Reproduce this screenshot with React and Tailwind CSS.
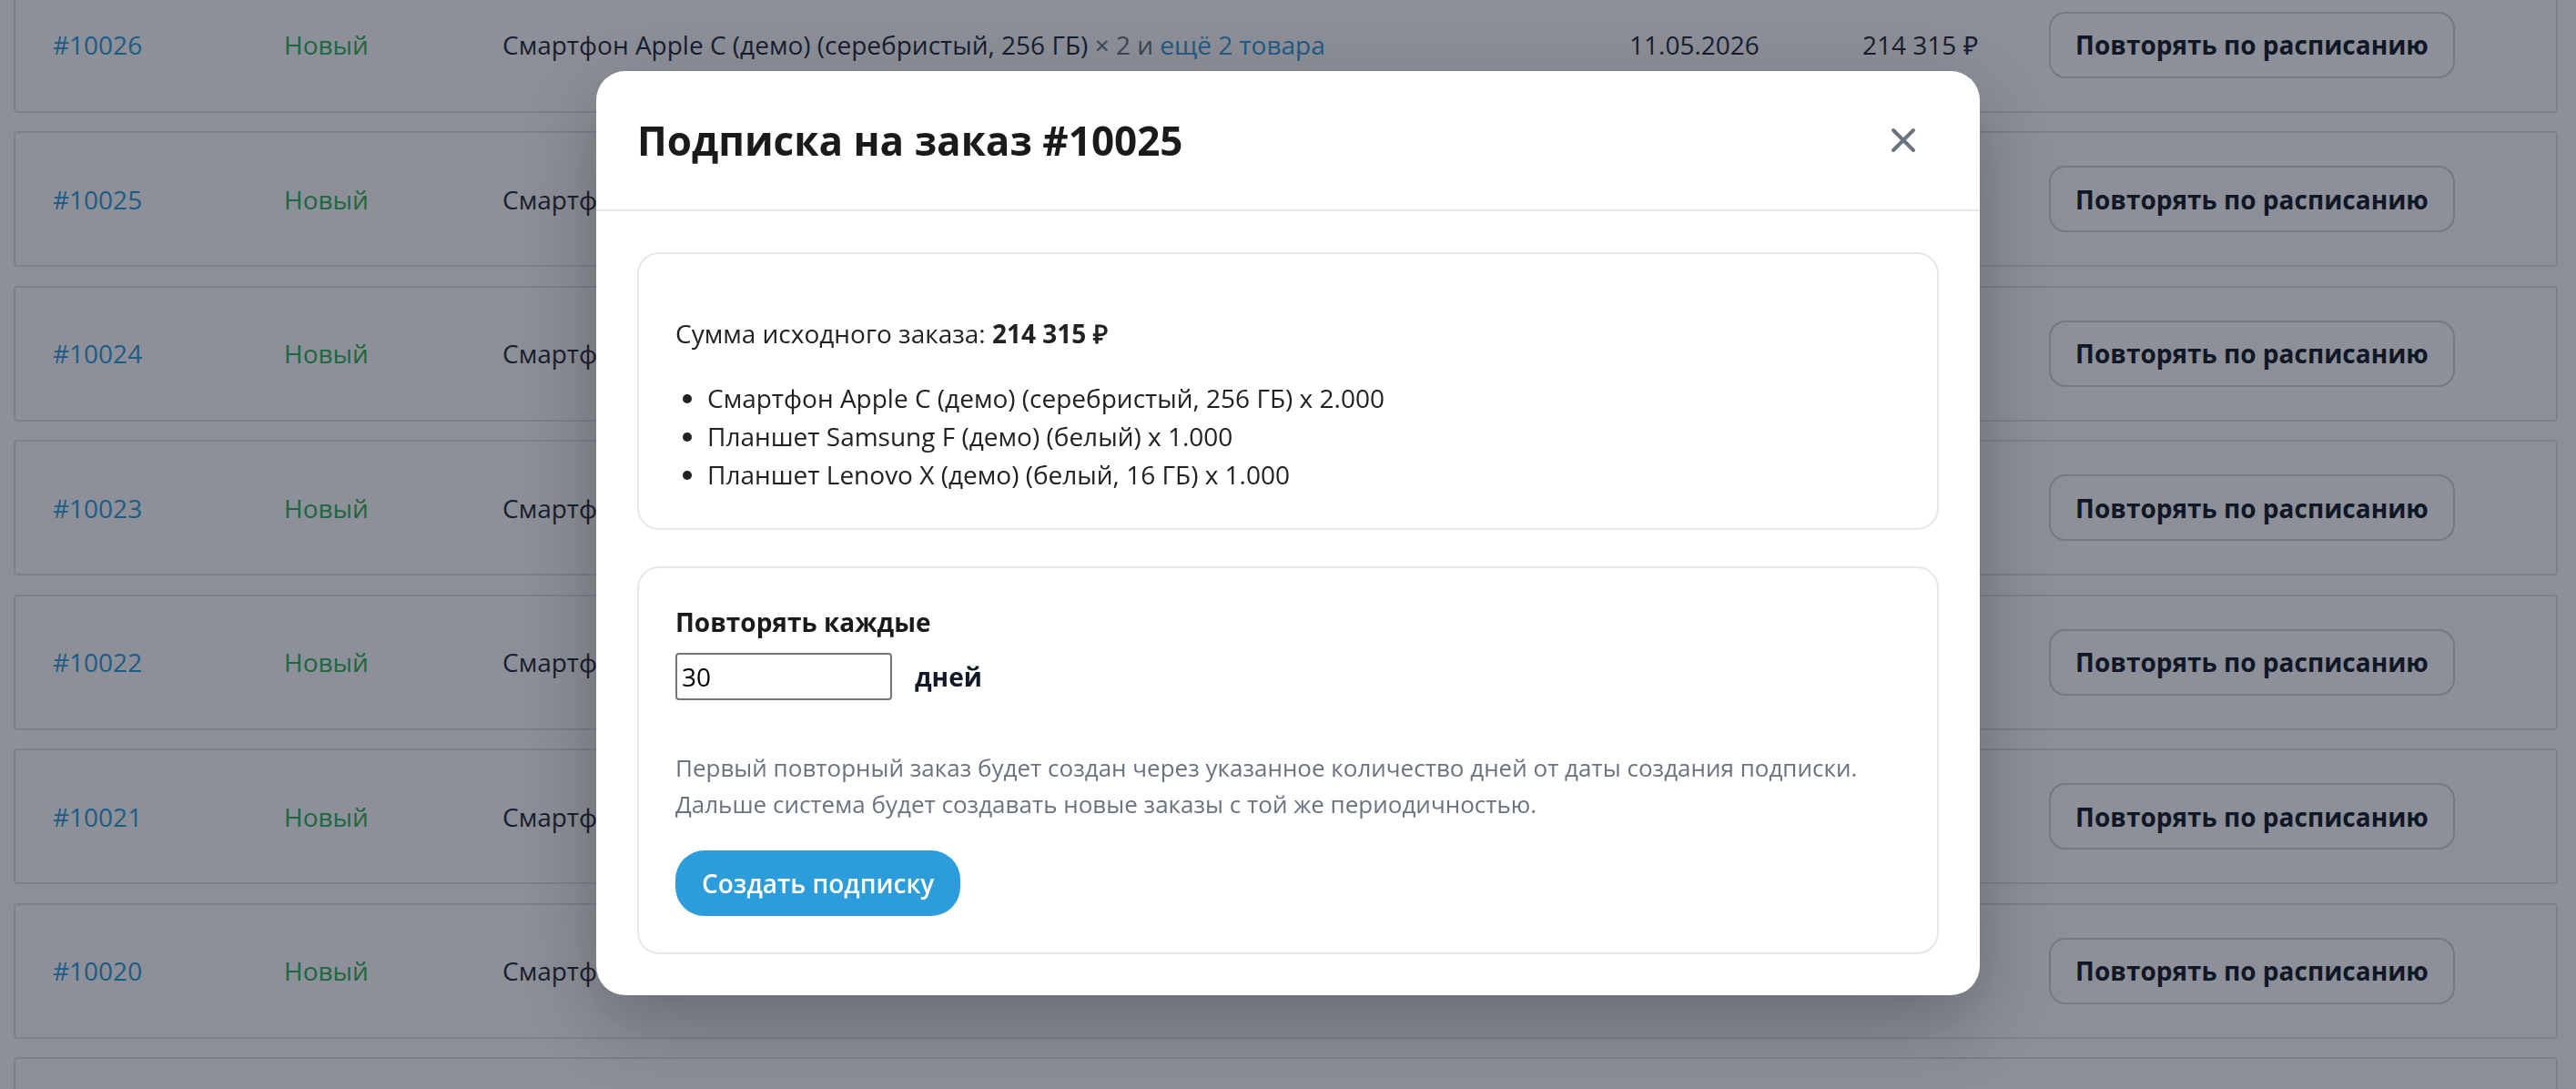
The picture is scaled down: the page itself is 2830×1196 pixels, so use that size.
import { useState } from "react";

const orders = [
  { id: 10026, date: "11.05.2026", total: "214 315 ₽" },
  { id: 10025, date: "11.05.2026", total: "214 315 ₽" },
  { id: 10024, date: "10.05.2026", total: "214 315 ₽" },
  { id: 10023, date: "10.05.2026", total: "214 315 ₽" },
  { id: 10022, date: "09.05.2026", total: "214 315 ₽" },
  { id: 10021, date: "09.05.2026", total: "214 315 ₽" },
  { id: 10020, date: "08.05.2026", total: "214 315 ₽" },
  { id: 10019, date: "08.05.2026", total: "214 315 ₽" },
];

const items = [
  "Смартфон Apple C (демо) (серебристый, 256 ГБ) x 2.000",
  "Планшет Samsung F (демо) (белый) x 1.000",
  "Планшет Lenovo X (демо) (белый, 16 ГБ) x 1.000",
];

function OrderRow({ order }) {
  return (
    <div className="grid h-[149px] grid-cols-[254px_240px_1238px_256px_205px_446px] items-center rounded-[4px] border-2 border-[#dfe2e8] bg-white pl-[41px] text-[28px] leading-[40px]">
      <a className="text-[#2d9cdb]">#{order.id}</a>
      <span className="text-[#2fae55]">Новый</span>
      <span className="whitespace-nowrap text-[#1f2937]">
        Смартфон Apple C (демо) (серебристый, 256 ГБ){" "}
        <span className="text-[#6b7280]">× 2 и</span>{" "}
        <a className="text-[#2d9cdb]">ещё 2 товара</a>
      </span>
      <span className="text-[#1f2937]">{order.date}</span>
      <span className="font-medium text-[#1f2937]">{order.total}</span>
      <button className="h-[73px] w-[446px] rounded-[18px] border-2 border-[#cdd3dd] font-bold text-[#111827]">
        Повторять по расписанию
      </button>
    </div>
  );
}

function CloseIcon() {
  return (
    <svg width="28" height="28" viewBox="0 0 28 28" fill="none">
      <path d="M3 3L25 25M25 3L3 25" stroke="#6b7280" strokeWidth="4" strokeLinecap="round" />
    </svg>
  );
}

function SubscriptionModal({ onClose }) {
  const [days, setDays] = useState("30");

  return (
    <div className="fixed inset-0 flex justify-center bg-[#111827]/[0.48] pt-[78px]">
      <div className="h-fit w-[1520px] rounded-[32px] bg-white shadow-[0_30px_90px_rgba(0,0,0,0.28)]">
        <div className="flex h-[154px] items-center justify-between border-b-2 border-[#e6e7eb] px-[45px]">
          <h2 className="text-[44px] font-bold text-[#1a1a1a]">Подписка на заказ #10025</h2>
          <button onClick={onClose} className="mr-[25px] flex">
            <CloseIcon />
          </button>
        </div>

        <div className="flex flex-col gap-[40px] p-[45px] text-[28px] leading-[42px] text-[#222]">
          <div className="rounded-[24px] border-2 border-[#e6e7eb] px-[40px] pt-[40px] pb-[38px]">
            <p className="mt-[26px]">
              Сумма исходного заказа: <b className="font-bold">214 315 ₽</b>
            </p>
            <ul className="mt-[29px] list-disc pl-[35px]">
              {items.map((item) => (
                <li key={item}>{item}</li>
              ))}
            </ul>
          </div>

          <div className="rounded-[24px] border-2 border-[#e6e7eb] px-[40px] pt-[39px] pb-[40px]">
            <label className="block leading-[40px] font-bold text-[#1a1a1a]">Повторять каждые</label>
            <div className="mt-[14px] flex items-center gap-[25px]">
              <input
                value={days}
                onChange={(e) => setDays(e.target.value)}
                className="h-[52px] w-[238px] rounded-[4px] border-2 border-[#767676] px-[5px] text-[28px] text-black outline-none"
              />
              <span className="font-bold text-[#111827]">дней</span>
            </div>
            <p className="mt-[54px] text-[26px] leading-[40px] text-[#6b7280]">
              Первый повторный заказ будет создан через указанное количество дней от даты создания подписки.
              <br />
              Дальше система будет создавать новые заказы с той же периодичностью.
            </p>
            <button className="mt-[31px] h-[72px] rounded-[32px] bg-[#2d9cdb] px-[29px] font-semibold text-white">
              Создать подписку
            </button>
          </div>
        </div>
      </div>
    </div>
  );
}

export default function App() {
  const [open, setOpen] = useState(true);

  return (
    <div className="min-h-screen overflow-hidden bg-white font-['Open_Sans',sans-serif]">
      <div className="-mt-[25.5px] ml-[15px] mr-[20px] flex flex-col gap-[20.5px]">
        {orders.map((order) => (
          <OrderRow key={order.id} order={order} />
        ))}
      </div>
      {open && <SubscriptionModal onClose={() => setOpen(false)} />}
    </div>
  );
}
